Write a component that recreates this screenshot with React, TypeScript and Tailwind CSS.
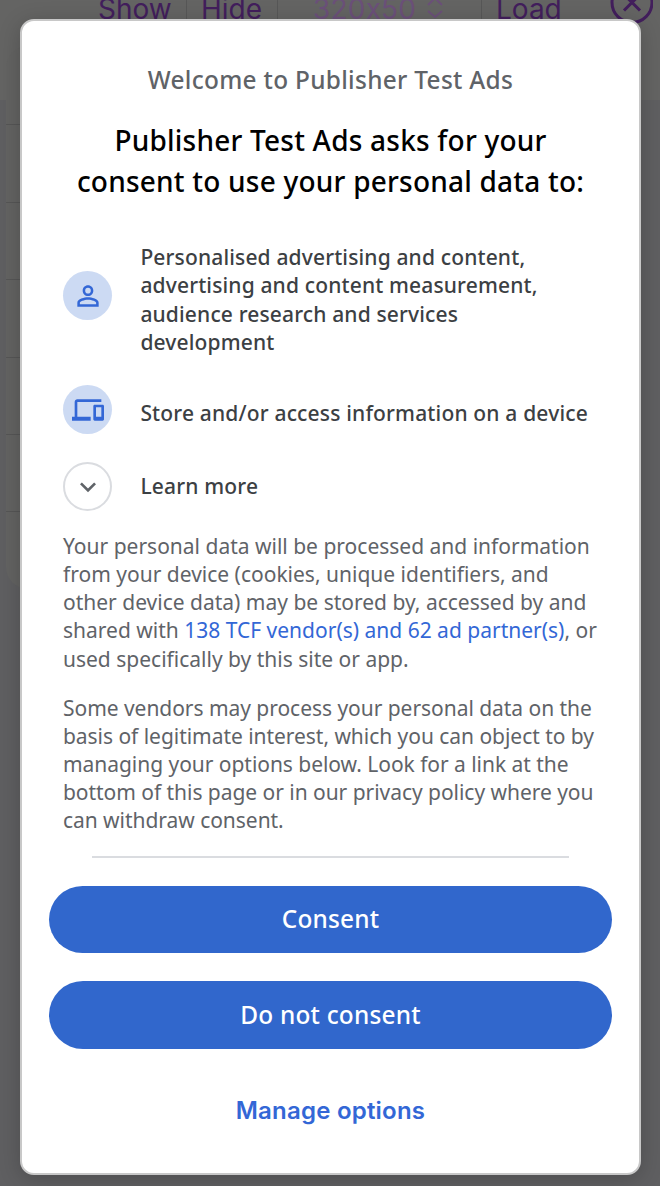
import React from "react";

const purposes = [
  "Personalised advertising and content,",
  "advertising and content measurement,",
  "audience research and services",
  "development",
];

function PersonIcon() {
  return (
    <svg viewBox="0 0 24 24" className="size-8" fill="#3367d6">
      <path d="M12 5.9a2.1 2.1 0 1 1 0 4.2 2.1 2.1 0 0 1 0-4.2m0 9c2.97 0 6.1 1.46 6.1 2.1v1.1H5.9V17c0-.64 3.13-2.1 6.1-2.1M12 4C9.79 4 8 5.79 8 8s1.79 4 4 4 4-1.79 4-4-1.79-4-4-4zm0 9c-2.67 0-8 1.34-8 4v3h16v-3c0-2.66-5.33-4-8-4z" />
    </svg>
  );
}

function DevicesIcon() {
  return (
    <svg viewBox="0 0 24 24" className="size-8" fill="#3367d6">
      <path d="M4 6h18V4H4c-1.1 0-2 .9-2 2v11H0v3h14v-3H4V6zm19 2h-6c-.55 0-1 .45-1 1v10c0 .55.45 1 1 1h6c.55 0 1-.45 1-1V9c0-.55-.45-1-1-1zm-1 9h-4v-7h4v7z" />
    </svg>
  );
}

function ChevronIcon() {
  return (
    <svg viewBox="0 0 24 24" className="size-8" fill="#5f6368">
      <path d="M16.59 8.59 12 13.17 7.41 8.59 6 10l6 6 6-6z" />
    </svg>
  );
}

function Backdrop() {
  return (
    <div className="flex h-full flex-col bg-[#5f5f61] font-[Inter,sans-serif] text-[28px] leading-8 text-[#421e5c]">
      <div className="h-[100px] shrink-0 bg-[#646463]">
        <div className="-mt-[7px] flex h-8 whitespace-nowrap pl-[98px]">
          <span className="w-[88px]">Show</span>
          <span className="w-[91px] border-l border-[#575757] pl-[14px]">Hide</span>
          <span className="flex w-[204px] border-l border-[#575757] pl-[35px] text-[#6b5079]">
            <span className="w-[114px] tracking-[0.2px]">320x50</span>
            <svg viewBox="0 0 16 28" className="mt-px h-7 w-4 shrink-0" fill="none" stroke="#6b5079" strokeWidth="2">
              <path d="m1 11 7-7 7 7M1 17l7 6 7-6" />
            </svg>
          </span>
          <span className="w-[128px] border-l border-[#575757] pl-[14px]">Load</span>
          <svg viewBox="0 0 44 44" className="-mt-[11px] size-11 shrink-0" fill="none" stroke="#421e5c" strokeWidth="3">
            <circle cx="23" cy="20.500" r="20" />
            <path d="m15 12.500 16 16m0-16-16 16" />
          </svg>
        </div>
      </div>
      <div className="-mt-[54px] ml-[6px] h-[543px] w-[600px] shrink-0 rounded-[22px] bg-[#636362] pt-[2px]">
        {[0, 1, 2, 3, 4, 5].map((row) => (
          <div key={row} className="h-[77.4px] border-b border-[#565656]" />
        ))}
      </div>
    </div>
  );
}

export default function App() {
  return (
    <div className="relative h-[1186px] w-[660px] overflow-hidden">
      <Backdrop />
      <div className="absolute inset-0 pl-5 pt-[19px]">
        <main className="flex h-[1155.5px] w-[621px] flex-col rounded-[14px] border-2 border-[#c8c8c8] bg-white px-[27.4px] font-['Noto_Sans',sans-serif] shadow-[0_4px_22px_rgba(0,0,0,0.2)]">
          <p className="mt-[41px] h-[36px] text-center text-[24.4px] font-medium leading-9 tracking-[0.3px] text-[#5f6368]">
            Welcome to Publisher Test Ads
          </p>
          <h1 className="mt-[22px] text-center text-[28px] font-medium leading-[41px] tracking-[0.22px] text-black">
            <span className="block whitespace-nowrap">Publisher Test Ads asks for your</span>
            <span className="block whitespace-nowrap">consent to use your personal data to:</span>
          </h1>
          <div className="mt-[41.4px] flex items-center whitespace-nowrap pl-[14px] text-[21px] font-medium leading-[28.1px] tracking-[0.15px] text-[#3c4043]">
            <span className="-mt-[8px] mr-[28px] flex size-[49px] items-center justify-center rounded-full bg-[#ccdaf3]">
              <PersonIcon />
            </span>
            <div>
              {purposes.map((line) => (
                <span key={line} className="block">{line}</span>
              ))}
            </div>
          </div>
          <div className="mt-[29.4px] flex h-[49px] items-center whitespace-nowrap pl-[14px] text-[21px] font-medium tracking-[0.17px] text-[#3c4043]">
            <span className="mr-[28px] flex size-[49px] items-center justify-center rounded-full bg-[#ccdaf3]">
              <DevicesIcon />
            </span>
            <span className="pt-[8px]">Store and/or access information on a device</span>
          </div>
          <div className="mt-[28px] flex h-[49px] items-center pl-[14px] text-[21px] font-medium tracking-[0.17px] text-[#3c4043]">
            <span className="mr-[28px] flex size-[49px] items-center justify-center rounded-full border-2 border-[#dadce0]">
              <ChevronIcon />
            </span>
            <span>Learn more</span>
          </div>
          <div className="mt-[21px] flex flex-col gap-[21px] whitespace-nowrap pl-[13.6px] text-[21px] leading-[28.1px] text-[#5f6368]">
            <p>
              <span className="block">Your personal data will be processed and information</span>
              <span className="block">from your device (cookies, unique identifiers, and</span>
              <span className="block">other device data) may be stored by, accessed by and</span>
              <span className="block">shared with <a className="text-[#3367d6]">138 TCF vendor(s) and 62 ad partner(s)</a>, or</span>
              <span className="block">used specifically by this site or app.</span>
            </p>
            <p className="tracking-[-0.04px]">
              <span className="block">Some vendors may process your personal data on the</span>
              <span className="block">basis of legitimate interest, which you can object to by</span>
              <span className="block">managing your options below. Look for a link at the</span>
              <span className="block">bottom of this page or in our privacy policy where you</span>
              <span className="block">can withdraw consent.</span>
            </p>
          </div>
          <hr className="mx-[42.6px] mt-[22.2px] border-t-2 border-[#dadce0]" />
          <button className="mt-[28px] h-[67px] shrink-0 rounded-full bg-[#3167cc] text-[24.4px] font-medium tracking-[0.2px] text-white">Consent</button>
          <button className="mt-[28px] h-[68px] shrink-0 rounded-full bg-[#3167cc] text-[24.4px] font-medium tracking-[0.2px] text-white">Do not consent</button>
          <button className="mt-[28px] h-[67px] shrink-0 font-[Inter,sans-serif] text-[24px] font-semibold tracking-[0.22px] text-[#3367d6]">Manage options</button>
        </main>
      </div>
    </div>
  );
}
